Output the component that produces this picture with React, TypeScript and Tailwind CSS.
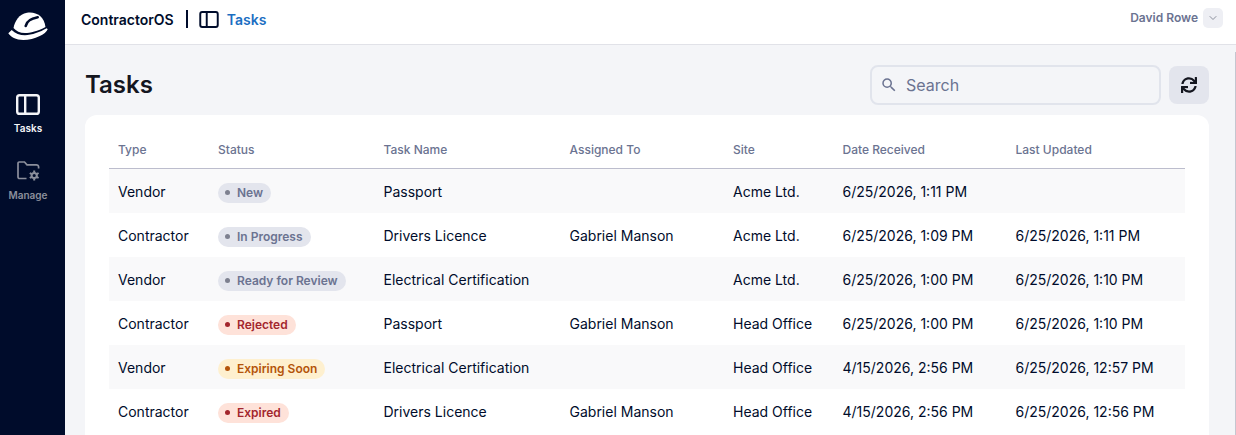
import { ChevronDown } from "lucide-react";
import { MdSearch } from "react-icons/md";
import { FaSync } from "react-icons/fa";

const PanelIcon = ({ className }: { className?: string }) => (
  <svg viewBox="0 0 24 21" fill="none" stroke="currentColor" strokeWidth="2.4" className={className}>
    <rect x="1.2" y="1.2" width="21.6" height="18.6" rx="2.4" />
    <path d="M9.2 1.2v18.6" />
  </svg>
);

const Helmet = () => (
  <svg viewBox="0 0 40 28" className="w-[40px] h-[28px]" fill="#fff">
    <path d="M5.5 16C7 9 11 2 19 .8C28-.5 36 4 37.5 15C30 19 22 21 17 21C12 21 8 19 5.5 16Z" />
    <path d="M.3 21.3L3.7 18C7 21.5 12 23.2 17 23.2C24 23.2 32 20 38.7 16.3L39.7 17.3C38 22 27 28 15.3 28C8 28 2.5 25 .3 21.3Z" />
    <path d="M17.7 14C18.5 9.5 23 6.5 29.7 5.3" fill="none" stroke="#000c2b" strokeWidth="2.6" strokeLinecap="round" />
  </svg>
);

const FolderGear = () => (
  <svg viewBox="0 0 23 20" className="w-[23px] h-[20px] text-[#8b8f9c]" fill="none" stroke="currentColor">
    <path d="M9.5 17.5H2.6A1.6 1.6 0 0 1 1 15.9V2.2A1.2 1.2 0 0 1 2.2 1H7.5L10 3.8H19.4A2.2 2.2 0 0 1 21.6 6V7.5" strokeWidth="1.7" />
    <circle cx="17.2" cy="14.5" r="2.6" strokeWidth="2" />
    <path d="M17.2 9.4v2.2M17.2 17.4v2.2M12.8 12l1.9 1.1M19.7 15.9l1.9 1.1M12.8 17l1.9-1.1M19.7 13.1l1.9-1.1" strokeWidth="2" />
  </svg>
);

type Kind = "gray" | "red" | "amber";
const badge: Record<Kind, string> = {
  gray: "bg-[#e3e5ed] text-[#6b7391]",
  red: "bg-[#fee2d9] text-[#a3262d]",
  amber: "bg-[#fef0cf] text-[#b4540a]",
};
const dot: Record<Kind, string> = {
  gray: "bg-[#7d808f]",
  red: "bg-[#a3262d]",
  amber: "bg-[#b4540a]",
};

const rows: [string, string, Kind, string, string, string, string, string][] = [
  ["Vendor", "New", "gray", "Passport", "", "Acme Ltd.", "6/25/2026, 1:11 PM", ""],
  ["Contractor", "In Progress", "gray", "Drivers Licence", "Gabriel Manson", "Acme Ltd.", "6/25/2026, 1:09 PM", "6/25/2026, 1:11 PM"],
  ["Vendor", "Ready for Review", "gray", "Electrical Certification", "", "Acme Ltd.", "6/25/2026, 1:00 PM", "6/25/2026, 1:10 PM"],
  ["Contractor", "Rejected", "red", "Passport", "Gabriel Manson", "Head Office", "6/25/2026, 1:00 PM", "6/25/2026, 1:10 PM"],
  ["Vendor", "Expiring Soon", "amber", "Electrical Certification", "", "Head Office", "4/15/2026, 2:56 PM", "6/25/2026, 12:57 PM"],
  ["Contractor", "Expired", "red", "Drivers Licence", "Gabriel Manson", "Head Office", "4/15/2026, 2:56 PM", "6/25/2026, 12:56 PM"],
];

const cols = "grid grid-cols-[100px_165.5px_186px_163.5px_109.5px_173px_1fr]";
const heads = ["Type", "Status", "Task Name", "Assigned To", "Site", "Date Received", "Last Updated"];

export default function App() {
  return (
    <div className="flex h-[435px] w-[1236px] overflow-hidden font-['Inter',sans-serif] bg-[#f4f5f8]">
      <aside className="w-[65px] shrink-0 bg-[#000c2b] flex flex-col items-center pr-[9px]">
        <div className="mt-[12px]"><Helmet /></div>
        <div className="mt-[54px] flex flex-col items-center">
          <PanelIcon className="w-[24px] h-[21px] text-[#f4f5f8]" />
          <span className="text-[10px] font-semibold text-[#f4f5f8] leading-[12px] mt-[6.5px]">Tasks</span>
        </div>
        <div className="mt-[27.5px] flex flex-col items-center">
          <FolderGear />
          <span className="text-[10px] font-semibold text-[#8b8f9c] leading-[12px] mt-[8px]">Manage</span>
        </div>
      </aside>
      <div className="flex-1 flex flex-col min-w-0">
        <header className="h-[45px] shrink-0 bg-white border-b border-[#e1e2e8] flex items-center pl-[16px] pr-[13px] pb-[6px]">
          <span className="text-[14px] font-semibold text-[#000c2b]">ContractorOS</span>
          <span className="w-[2px] h-[18px] bg-[#000c2b] ml-[12px] mr-[11px]" />
          <PanelIcon className="w-[20px] h-[17px] text-[#000c2b]" />
          <span className="ml-[8px] text-[14px] font-semibold text-[#1b6ec2]">Tasks</span>
          <div className="ml-auto flex items-center mb-[2px]">
            <span className="text-[12px] font-semibold text-[#6b7391]">David Rowe</span>
            <span className="ml-[5px] w-5 h-5 rounded-[5px] bg-[#eeeff4] flex items-center justify-center">
              <ChevronDown className="w-3 h-3 text-[#8b8f9c]" />
            </span>
          </div>
        </header>
        <div className="flex-1 min-h-0 flex">
          <main className="flex-1 min-w-0 pl-[20px] pr-[26px]">
            <div className="h-[70px] flex items-center pt-[10px]">
              <h1 className="text-[24px] font-semibold text-[#14161f]">Tasks</h1>
              <label className="ml-auto w-[291px] h-[40px] rounded-[8px] border-2 border-[#e1e4ec] flex items-center pl-[8px]">
                <MdSearch className="w-[18px] h-[18px] text-[#6b7391]" />
                <span className="ml-[8px] text-[16px] text-[#6b7391]">Search</span>
              </label>
              <button className="ml-[8px] w-[40px] h-[38px] rounded-[8px] bg-[#e3e5ed] flex items-center justify-center">
                <FaSync className="w-[16px] h-[16px] text-[#14161f]" />
              </button>
            </div>
            <section className="bg-white rounded-t-[12px] px-[24px] pt-[16px] h-[400px]">
              <div className={`${cols} h-[38px] items-center border-b border-[#bcbdcd] text-[12px] font-medium text-[#6b7391] pl-[9px]`}>
                {heads.map((h) => <span key={h}>{h}</span>)}
              </div>
              {rows.map((r, i) => (
                <div key={i} className={`${cols} h-[44px] items-center pl-[9px] text-[14px] text-[#000c2b] ${i % 2 === 0 ? "bg-[#f9f9fa]" : ""}`}>
                  <span>{r[0]}</span>
                  <span>
                    <span className={`inline-flex items-center h-[20px] rounded-full pl-[7px] pr-[8px] text-[12px] font-semibold ${badge[r[2]]}`}>
                      <i className={`w-[5px] h-[5px] rounded-full mr-[7px] ${dot[r[2]]}`} />
                      {r[1]}
                    </span>
                  </span>
                  <span>{r[3]}</span>
                  <span>{r[4]}</span>
                  <span>{r[5]}</span>
                  <span>{r[6]}</span>
                  <span>{r[7]}</span>
                </div>
              ))}
            </section>
          </main>
          <div className="w-[1px] mt-[7px] bg-[#c5c6d0]" />
        </div>
      </div>
    </div>
  );
}
